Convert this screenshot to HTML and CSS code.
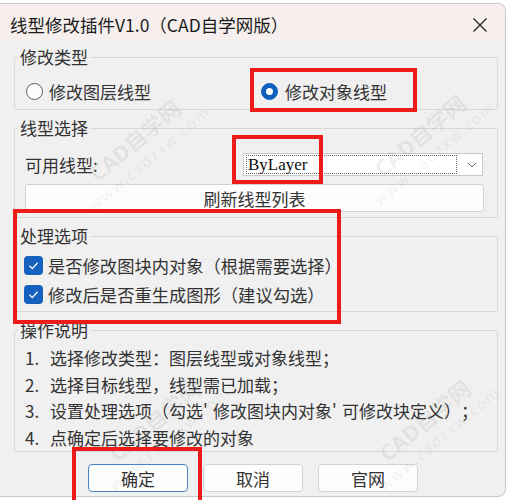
FILE: index.html
```html
<!DOCTYPE html>
<html lang="zh-CN">
<head>
<meta charset="utf-8">
<title>线型修改插件</title>
<link rel="stylesheet" href="styles.css">
</head>
<body>
<div class="window">
  <div class="titlebar">
    <span class="title">线型修改插件V1.0（CAD自学网版）</span>
    <svg class="close" width="16" height="16" viewBox="0 0 16 16"><path d="M1.5 1.5 L14.5 14.5 M14.5 1.5 L1.5 14.5" stroke="#222" stroke-width="1.3" fill="none"/></svg>
  </div>
  <div class="content">
    <fieldset class="group g1">
      <legend>修改类型</legend>
      <div class="radios">
        <div class="radio first"><span class="rb"></span><span>修改图层线型</span></div>
        <div class="radio on"><span class="rb"></span><span>修改对象线型</span></div>
      </div>
    </fieldset>

    <fieldset class="group g2">
      <legend>线型选择</legend>
      <div class="row">
        <span class="lbl">可用线型:</span>
        <div class="combo">
          <span class="val">ByLayer</span>
          <svg class="arrow" width="10" height="6" viewBox="0 0 10 6"><path d="M1 1 L5 5 L9 1" stroke="#666" stroke-width="1" fill="none"/></svg>
        </div>
      </div>
      <div class="refresh">刷新线型列表</div>
    </fieldset>

    <fieldset class="group g3">
      <legend>处理选项</legend>
      <div class="check"><span class="cb"><svg width="19" height="19" viewBox="0 0 19 19"><path d="M5.5 9.8 L8.3 12.6 L13.6 6.8" stroke="#fff" stroke-width="1.3" fill="none"/></svg></span><span>是否修改图块内对象（根据需要选择）</span></div>
      <div class="check"><span class="cb"><svg width="19" height="19" viewBox="0 0 19 19"><path d="M5.5 9.8 L8.3 12.6 L13.6 6.8" stroke="#fff" stroke-width="1.3" fill="none"/></svg></span><span>修改后是否重生成图形（建议勾选）</span></div>
    </fieldset>

    <fieldset class="group g4">
      <legend>操作说明</legend>
      <ol class="steps">
        <li><span class="n">1.</span><span>选择修改类型：图层线型或对象线型；</span></li>
        <li><span class="n">2.</span><span>选择目标线型，线型需已加载；</span></li>
        <li><span class="n">3.</span><span>设置处理选项（勾选<span class="q">'</span>修改图块内对象<span class="q">'</span>可修改块定义）；</span></li>
        <li><span class="n">4.</span><span>点确定后选择要修改的对象</span></li>
      </ol>
    </fieldset>
  </div>
  <div class="buttons">
    <div class="btn primary">确定</div>
    <div class="btn">取消</div>
    <div class="btn">官网</div>
  </div>
</div>

<div class="wm wm1"><span class="big">CAD自学网</span><span class="small">www.cadzxw.com</span></div>
<div class="wm wm2"><span class="big">CAD自学网</span><span class="small">www.cadzxw.com</span></div>
<div class="wm wm3"><span class="big">CAD自学网</span><span class="small">www.cadzxw.com</span></div>
<div class="wm wm4"><span class="big">CAD自学网</span><span class="small">www.cadzxw.com</span></div>

<div class="mark m1"></div>
<div class="mark m2"></div>
<div class="mark m3"></div>
<div class="mark m4"></div>
</body>
</html>
```

FILE: styles.css
```css
* { box-sizing: border-box; }
html, body { margin: 0; padding: 0; }
body {
  width: 510px;
  height: 500px;
  position: relative;
  overflow: hidden;
  background: #ffffff;
  font-family: "Noto Sans CJK SC", "Noto Sans", sans-serif;
  color: #2a2a2a;
  text-spacing-trim: space-all;
  font-feature-settings: "chws" 0, "halt" 0, "palt" 0;
}
.window {
  margin-top: 3px;
  width: 506px;
  height: 494px;
  background: #f0f0f0;
  border: 1px solid #c8c8c8;
  border-left: 0;
  border-radius: 0 8px 8px 0;
  overflow: hidden;
}
.titlebar {
  height: 38px;
  padding: 4px 17px 0 10px;
  background: #f6efed;
  display: flex;
  align-items: center;
  justify-content: space-between;
}
.title {
  font-size: 17.5px;
  line-height: 22px;
  color: #1b1b1b;
}
.content {
  padding: 5px 7px 0 14px;
}
.group {
  margin: 0;
  min-width: 0;
  border: 1px solid #d8d8d8;
  border-radius: 2px;
  padding: 0 13px 0 10px;
}
.group + .group { margin-top: 8px; }
.group legend {
  font-size: 17px;
  line-height: 20px;
  padding: 0 2px;
  margin-left: -7px;
  color: #333;
}
.g1 { padding-top: 12px; padding-bottom: 6px; }
.radios {
  display: flex;
  align-items: center;
  height: 24px;
  font-size: 17px;
  color: #333;
}
.radio { display: flex; align-items: center; gap: 6px; }
.radio.first { width: 235px; margin-left: 1px; }
.rb {
  width: 17px;
  height: 17px;
  border-radius: 50%;
  border: 1px solid #5c5c5c;
  background: #fdfdfd;
  position: relative;
}
.radio.on .rb {
  background: #0f5fbf;
  border-color: #0f5fbf;
}
.radio.on .rb::after {
  content: "";
  position: absolute;
  left: 4px;
  top: 4px;
  width: 7px;
  height: 7px;
  border-radius: 50%;
  background: #fff;
}
.radio.on { gap: 7px; }

.g2 { padding-top: 15px; padding-bottom: 5px; }
.row {
  display: flex;
  align-items: center;
  height: 23px;
  font-size: 17px;
  color: #333;
}
.lbl { width: 218px; }
.combo {
  width: 240px;
  height: 23px;
  background: #fff;
  border: 1px solid #c9c9c9;
  display: flex;
  align-items: center;
  padding: 0 0 0 2px;
}
.val {
  width: 211px;
  height: 19px;
  border: 1px dotted #6a6a6a;
  font-family: "Liberation Serif", "DejaVu Serif", serif;
  font-size: 17px;
  line-height: 17px;
  padding-left: 1px;
  color: #111;
}
.arrow { margin-left: 10px; }
.refresh {
  margin-top: 8px;
  height: 28px;
  background: #fdfdfd;
  border: 1px solid #d3d3d3;
  border-radius: 3px;
  display: flex;
  align-items: center;
  justify-content: center;
  font-size: 17px;
  color: #333;
}

.g3 { padding-top: 5px; padding-bottom: 2px; }
.check {
  display: flex;
  align-items: center;
  gap: 5px;
  height: 29px;
  font-size: 17.3px;
  color: #333;
  margin-left: -1px;
}
.cb {
  width: 19px;
  height: 19px;
  border-radius: 4px;
  background: #1561bd;
  display: block;
}
.cb svg { display: block; }

.g4 { padding-top: 5px; padding-bottom: 0; }
.steps {
  list-style: none;
  margin: 0;
  padding: 0;
  font-size: 17px;
  line-height: 26.5px;
  color: #333;
}
.steps li { display: flex; }
.steps .n { width: 25px; }
.q { display: inline-block; width: 10px; }

.buttons {
  display: flex;
  justify-content: center;
  gap: 15px;
  margin-top: 12px;
  padding-left: 1px;
}
.btn {
  width: 100px;
  height: 28px;
  background: #fdfdfd;
  border: 1px solid #d3d3d3;
  border-radius: 4px;
  display: flex;
  align-items: center;
  justify-content: center;
  font-size: 17px;
  color: #333;
}
.btn.primary { border-color: #4a82c4; }

.wm {
  position: absolute;
  display: flex;
  flex-direction: column;
  align-items: center;
  transform: rotate(-40deg);
  color: rgba(90, 90, 90, 0.09);
  pointer-events: none;
  white-space: nowrap;
  font-family: "Noto Sans", "Noto Sans CJK SC", sans-serif;
}
.wm .big { font-size: 22px; font-weight: bold; line-height: 26px; }
.wm .small { font-size: 15px; letter-spacing: 2px; line-height: 20px; }
.wm1 { left: 65px; top: 125px; }
.wm2 { left: 350px; top: 120px; }
.wm3 { left: 85px; top: 405px; }
.wm4 { left: 355px; top: 405px; }

.mark {
  position: absolute;
  border: 4px solid #ee1b1b;
}
.m1 { left: 250px; top: 68px; width: 167px; height: 44px; }
.m2 { left: 232px; top: 135px; width: 91px; height: 49px; }
.m3 { left: 13px; top: 209px; width: 328px; height: 115px; }
.m4 { left: 72px; top: 447px; width: 130px; height: 53px; border-bottom: 0; }
```
